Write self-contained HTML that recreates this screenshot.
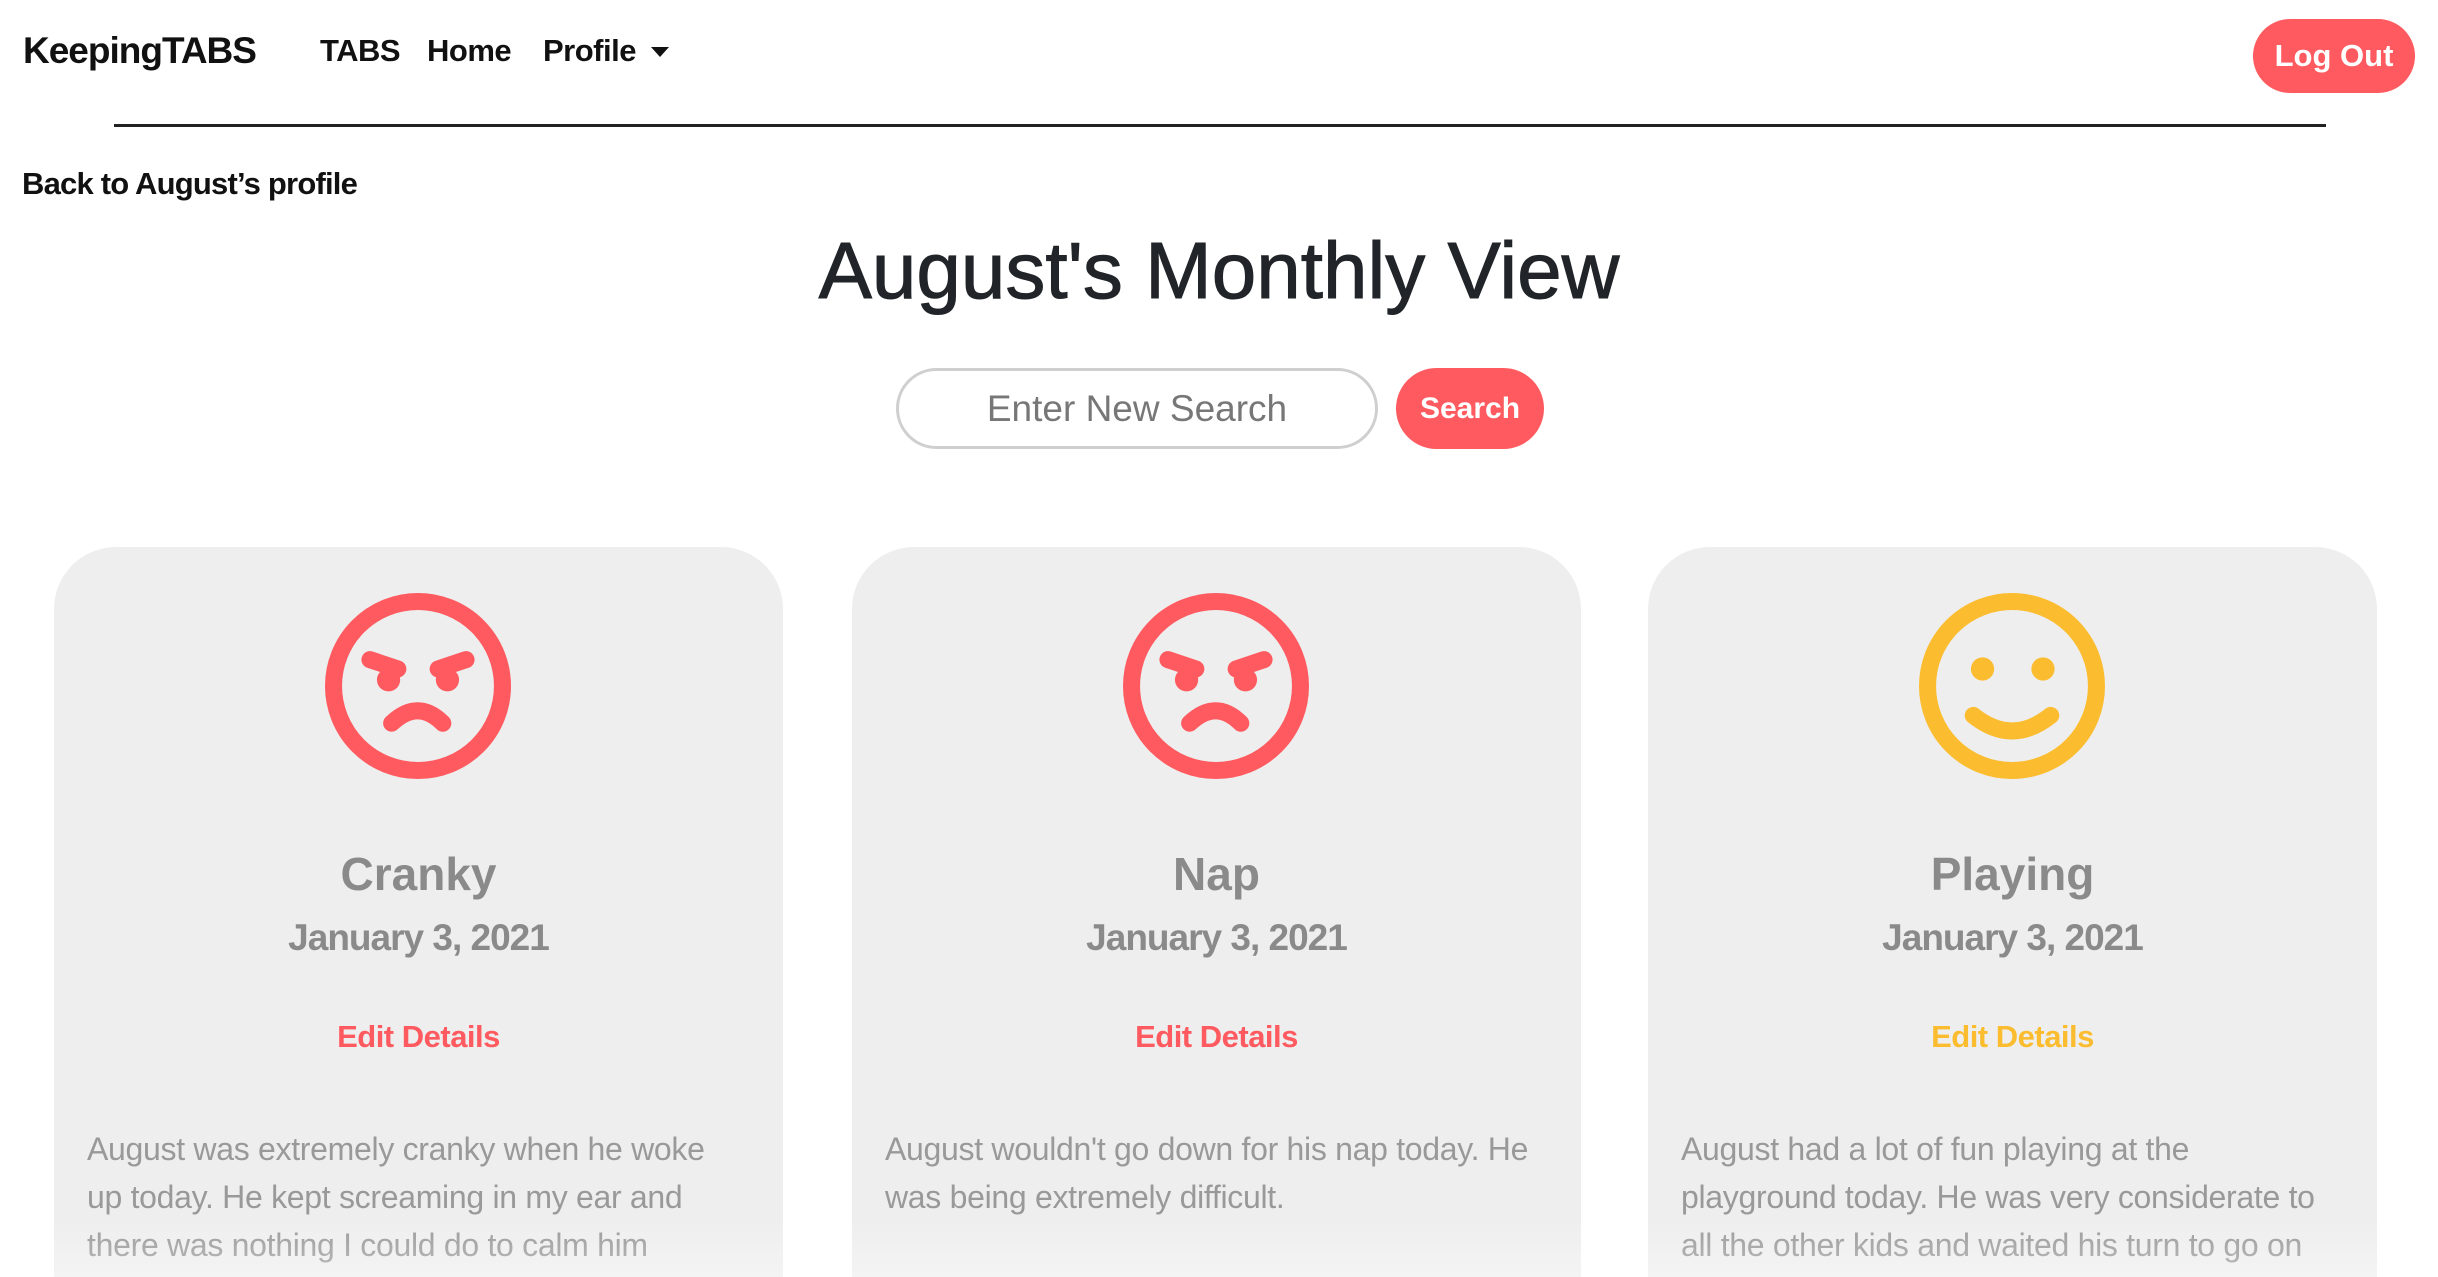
<!DOCTYPE html>
<html><head><meta charset="utf-8"><style>
*{margin:0;padding:0;box-sizing:border-box}
html,body{width:2438px;height:1277px;overflow:hidden}
body{background:#fff;font-family:"Liberation Sans",sans-serif;position:relative;color:#111}
.a{position:absolute;white-space:nowrap}
.nav{font-size:31px;font-weight:bold;top:33px;letter-spacing:-0.5px}
.card{position:absolute;top:547px;width:729px;height:730px;background:#eeeeee;border-radius:62px 62px 0 0}
.card .t{position:absolute;left:0;right:0;text-align:center;white-space:nowrap}
.ttl{top:300px;font-size:46px;color:#8a8a8a;font-weight:bold}
.dt{top:370px;font-size:37px;color:#8a8a8a;font-weight:bold;letter-spacing:-1px}
.ed{top:472px;font-size:31px;font-weight:bold;letter-spacing:-0.5px}
.p{position:absolute;left:33px;top:578px;font-size:32px;line-height:48px;color:#999;white-space:nowrap;letter-spacing:-0.3px}
.fade{position:absolute;left:0;right:0;bottom:0;height:60px;background:linear-gradient(rgba(255,255,255,0),rgba(255,255,255,0.35))}
</style></head><body>
<div class="a" style="left:23px;top:30px;font-size:37px;font-weight:bold;letter-spacing:-1px">KeepingTABS</div>
<div class="a nav" style="left:320px">TABS</div>
<div class="a nav" style="left:427px">Home</div>
<div class="a nav" style="left:543px">Profile</div>
<div class="a" style="left:651px;top:47px;width:0;height:0;border-left:9px solid transparent;border-right:9px solid transparent;border-top:10px solid #111"></div>
<div class="a" style="left:2253px;top:19px;width:162px;height:74px;border-radius:37px;background:#ff5a5f;color:#fff;font-size:31px;font-weight:bold;text-align:center;line-height:74px">Log Out</div>
<div class="a" style="left:114px;top:124px;width:2212px;height:3px;background:#222"></div>
<div class="a" style="left:22px;top:166px;font-size:31px;font-weight:bold;letter-spacing:-0.8px">Back to August’s profile</div>
<div class="a" style="left:0;width:2438px;text-align:center;top:225px;font-size:80px;color:#212529;font-weight:normal;-webkit-text-stroke:1px #212529">August's Monthly View</div>
<div class="a" style="left:896px;top:368px;width:482px;height:81px;border:3px solid #cfcfcf;border-radius:41px;text-align:center;line-height:75px;font-size:37px;color:#777">Enter New Search</div>
<div class="a" style="left:1396px;top:368px;width:148px;height:81px;border-radius:41px;background:#ff5a5f;color:#fff;text-align:center;line-height:81px;font-size:30px;font-weight:bold">Search</div>

<div class="card" style="left:54px">
<svg width="186" height="186" viewBox="0 0 120 120" style="position:absolute;left:271px;top:46px"><g fill="none" stroke="#ff5a5f" stroke-width="11" stroke-linecap="round"><circle cx="60" cy="60" r="54.5"/><path d="M29 43 L47 49 M91 43 L73 49"/><path d="M43 84 Q60 68 76 84"/></g><circle cx="41" cy="56" r="7.5" fill="#ff5a5f"/><circle cx="79" cy="56" r="7.5" fill="#ff5a5f"/></svg>
<div class="t ttl">Cranky</div><div class="t dt">January 3, 2021</div><div class="t ed" style="color:#ff5a5f">Edit Details</div>
<div class="p">August was extremely cranky when he woke<br>up today. He kept screaming in my ear and<br>there was nothing I could do to calm him</div>
</div>
<div class="card" style="left:852px">
<svg width="186" height="186" viewBox="0 0 120 120" style="position:absolute;left:271px;top:46px"><g fill="none" stroke="#ff5a5f" stroke-width="11" stroke-linecap="round"><circle cx="60" cy="60" r="54.5"/><path d="M29 43 L47 49 M91 43 L73 49"/><path d="M43 84 Q60 68 76 84"/></g><circle cx="41" cy="56" r="7.5" fill="#ff5a5f"/><circle cx="79" cy="56" r="7.5" fill="#ff5a5f"/></svg>
<div class="t ttl">Nap</div><div class="t dt">January 3, 2021</div><div class="t ed" style="color:#ff5a5f">Edit Details</div>
<div class="p">August wouldn't go down for his nap today. He<br>was being extremely difficult.</div>
</div>
<div class="card" style="left:1648px">
<svg width="186" height="186" viewBox="0 0 120 120" style="position:absolute;left:271px;top:46px"><g fill="none" stroke="#fbbd2f" stroke-width="11" stroke-linecap="round"><circle cx="60" cy="60" r="54.5"/><path d="M35 79 Q60 99 85 79"/></g><circle cx="41" cy="49" r="7.5" fill="#fbbd2f"/><circle cx="80" cy="49" r="7.5" fill="#fbbd2f"/></svg>
<div class="t ttl">Playing</div><div class="t dt">January 3, 2021</div><div class="t ed" style="color:#fbbd2f">Edit Details</div>
<div class="p">August had a lot of fun playing at the<br>playground today. He was very considerate to<br>all the other kids and waited his turn to go on</div>
</div>
<div class="fade"></div>
</body></html>
